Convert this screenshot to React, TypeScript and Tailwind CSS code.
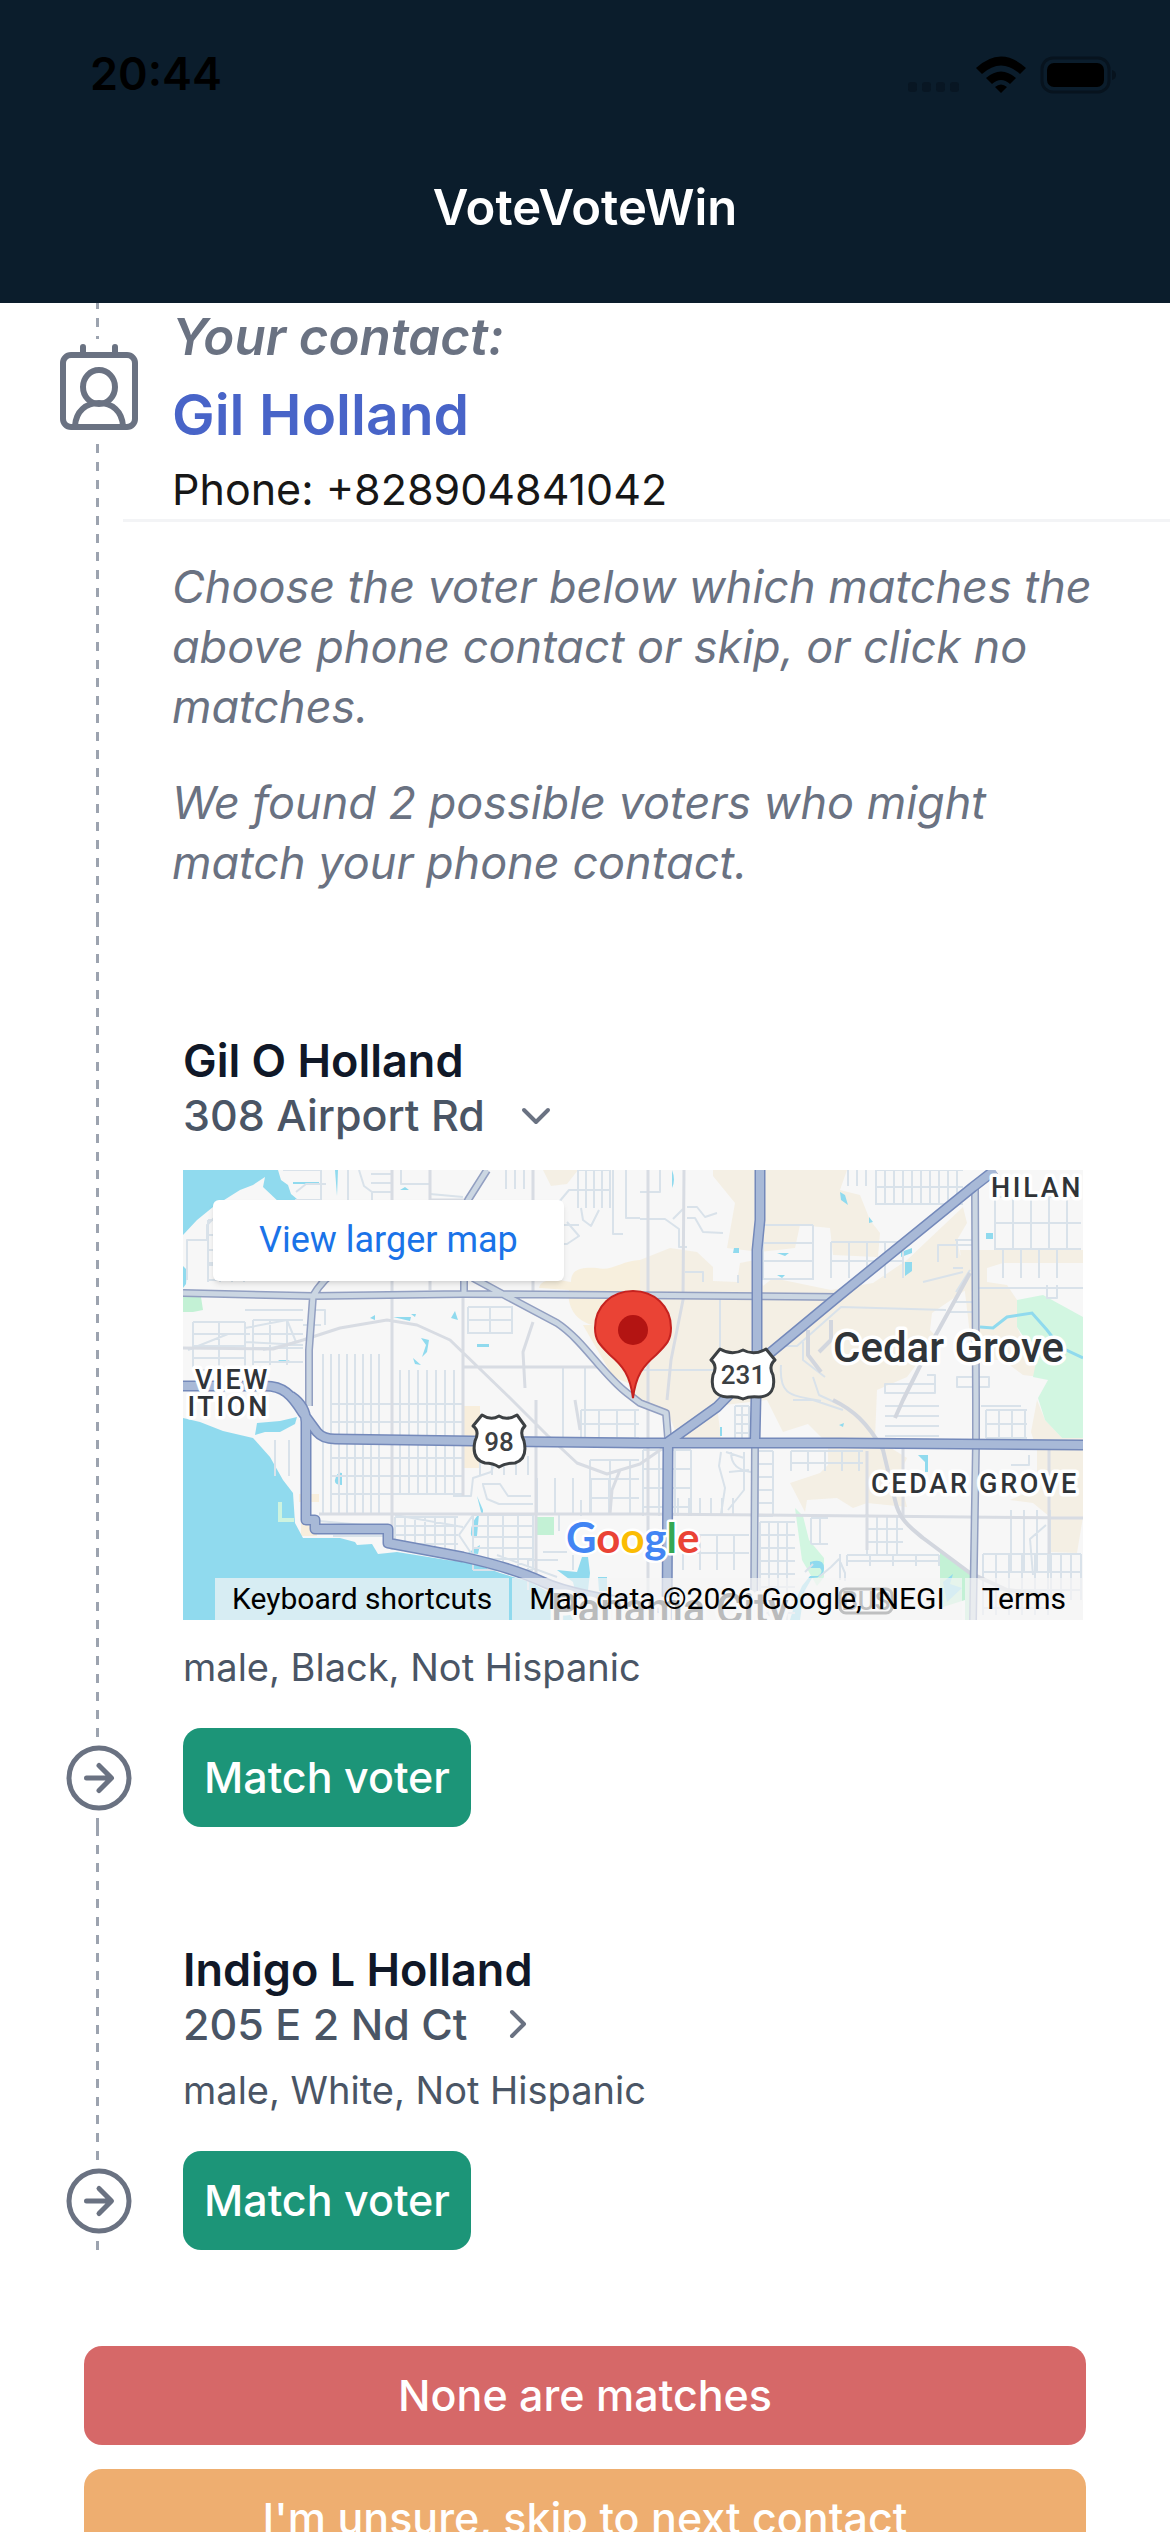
import type { ReactNode } from "react";

interface Voter {
  name: string;
  address: string;
  details: string;
  expanded: boolean;
}

const voters: Voter[] = [
  {
    name: "Gil O Holland",
    address: "308 Airport Rd",
    details: "male, Black, Not Hispanic",
    expanded: true,
  },
  {
    name: "Indigo L Holland",
    address: "205 E 2 Nd Ct",
    details: "male, White, Not Hispanic",
    expanded: false,
  },
];

// Path data for a block of evenly spaced streets
const block = (x1: number, y1: number, x2: number, y2: number, dx: number, dy: number) => {
  let d = "";
  for (let x = x1; dx > 0 && x <= x2; x += dx) d += `M${x} ${y1}V${y2}`;
  for (let y = y1; dy > 0 && y <= y2; y += dy) d += `M${x1} ${y}H${x2}`;
  return d;
};

const streets = [
  block(140, 184, 200, 345, 8, 0),
  block(217, 200, 279, 325, 9, 0),
  block(148, 234, 279, 326, 0, 18),
  block(92, 270, 120, 306, 14, 0),
  block(297, 286, 348, 305, 12, 0),
  block(290, 345, 350, 400, 15, 11),
  block(212, 347, 275, 380, 10, 9),
  block(10, 152, 62, 200, 26, 12),
  block(70, 150, 120, 195, 17, 14),
  block(25, 50, 62, 112, 12, 15),
  block(188, 4, 208, 24, 0, 9),
  block(323, 0, 350, 19, 9, 0),
  block(395, 0, 428, 38, 8, 20),
  block(665, 0, 690, 16, 9, 0),
  block(693, 0, 780, 35, 9, 17),
  block(812, 27, 898, 80, 18, 26),
  block(820, 80, 880, 108, 18, 0),
  block(580, 55, 630, 110, 50, 18),
  block(648, 72, 720, 108, 18, 19),
  block(552, 236, 566, 268, 7, 9),
  block(575, 281, 590, 346, 15, 13),
  block(608, 281, 680, 301, 17, 12),
  block(702, 236, 756, 266, 0, 10),
  block(803, 240, 844, 268, 13, 14),
  block(460, 280, 508, 346, 16, 19),
  block(495, 328, 560, 346, 11, 0),
  block(500, 365, 566, 400, 17, 18),
  block(577, 352, 612, 450, 9, 13),
  block(628, 348, 645, 374, 9, 26),
  block(684, 346, 720, 384, 10, 13),
  block(664, 385, 756, 396, 23, 6),
  block(800, 384, 868, 445, 13, 18),
  block(828, 340, 867, 402, 13, 0),
  block(868, 384, 898, 430, 10, 18),
  block(398, 240, 456, 270, 18, 14),
  block(407, 290, 456, 345, 20, 19),
  block(354, 308, 426, 345, 18, 0),
  block(380, 197, 402, 270, 22, 0),
  block(285, 137, 330, 164, 22, 13),
  "M4 110V70H24V55l22-22H84l4 10M24 93H95M62 140H120M62 172L120 175M62 158L104 150l9 22L80 180",
  "M5 180L45 164h22M120 155L138 155M132 140h10v15M100 0h38V30H112M113 22l10-8h20M176 0l5 16 8 6v14M218 0v14h28M247 24l33 3M165 0V30",
  "M352 32h24l10-12h42M398 38l2 12 8 6 8-16M350 55h46M384 52l12 14-12 8h-22M430 0V64h10M443 0v48h14",
  "M457 22h20V0M457 49h25l14 10v18h8M504 37h10l8 10 12-4M504 48h8l8 14 20 1M490 49l10-10",
  "M502 102h18v10M555 105v8M537 129v50M457 200h76M598 195c-2 30 8 30 40 36M590 176h24l44-39 105 3M620 170v20l22 17M630 207l6 18 26 12M610 230l20 0 30 10",
  "M740 112l40-10M772 70h20M774 70V88M772 132h18M766 142h24M773 122l14-22M774 207h32v10h-32zM744 205h8v18h-50v-9h50M864 115v13h10v-13",
  "M770 98H780M790 118h110M755 92V75h40M798 236h40M846 285v10h-18M720 290v60",
  "M270 326h18l2-18 18-6 6-15M299 314h18l8 12h23M300 315l4 14 12 5h34M290 345l-14 20 16 24M314 385l60 22",
  "M345 420v-30h30M376 345v16M390 385v15M398 330v16M360 382h24M383 344h74M212 345l68 12M136 351l66 6M150 366h55",
  "M538 282l-2 14 6 22-4 26M548 282c0 14 8 18 20 20M543 282l18 6M545 340l16-20V282M566 300l-20 2",
  "M636 407l12-10 8-8 6 14 0 8M622 402l8-8M657 384v26M850 405l-3-36 16-14",
].join("");

const arterials =
  "M209 0V380M280 124V326M350 0V125M353 230V410M136 344H457L900 348M280 197H415M465 0V450M501 0L500 130 488 190 484 230M247 0V120M684 281V380M720 270V346M866 280V384M248 30H281M0 178L90 179 120 170 157 158 204 150 234 155 267 170 327 228 364 265 394 293 424 304 457 294 480 278M392 230l5 30M350 152l-10 30 2 36M437 300l-8 20-2 24";

const rails =
  "M787 103L750 170 720 230 712 248M650 230C670 240 684 252 700 280L712 330C716 350 728 358 740 368L787 403 824 420 860 424M625 160V185L638 202M648 150V170L636 182";

const motorways = [
  "M0 216H82C100 216 108 224 120 243L134 262Q140 269 152 269L290 271 457 273 657 273 900 275",
  "M108 226Q123 236 123 252V350H132V359H205V373L280 387Q330 398 360 412T480 438",
  "M485 272L534 237 587 183 657 125 790 17 812 0",
  "M577 0V50L574 80V180L572 272",
  "M485 272L484 450",
].join("");

const highways = [
  "M0 123L130 126 280 124 427 125 657 127",
  "M304 0L285 30Q281 38 281 50V124",
  "M126 236V180L130 126Q140 108 160 96",
  "M290 108L325 127 374 153C400 170 420 205 444 223L457 233 483 243 485 268",
  "M792 17L793 230V273L790 450",
  "M572 273L571 450",
].join("");

const ArrowCircle = () => (
  <svg viewBox="0 0 512 512" className="size-20" fill="none" stroke="currentColor" strokeWidth="32" aria-hidden="true">
    <circle cx="256" cy="256" r="192" strokeMiterlimit="10" />
    <path d="M256 176l80 80-80 80M328 256H176" strokeLinecap="round" strokeLinejoin="round" />
  </svg>
);

const ContactIcon = () => (
  <svg viewBox="0 -2 80 93" className="h-[93px] w-20" fill="none" stroke="currentColor" strokeWidth="6" aria-hidden="true">
    <rect x="4" y="14" width="72" height="72" rx="8" />
    <path d="M24 13V6M56 13V6" strokeLinecap="round" />
    <ellipse cx="40" cy="46" rx="16" ry="17" />
    <path d="M16 85C17 70 27 62 40 62s23 8 24 23" />
  </svg>
);

const Chevron = ({ open }: { open: boolean }) => (
  <svg
    viewBox="0 0 54 54"
    className="size-[54px] text-gray-500"
    fill="none"
    stroke="currentColor"
    strokeWidth="4"
    strokeLinecap="round"
    strokeLinejoin="round"
    aria-hidden="true"
  >
    <path d={open ? "M15 22l12 12 12-12" : "M21 15l12 12-12 12"} />
  </svg>
);

const StatusBar = () => (
  <div className="flex items-center justify-between pt-[44px] pr-[53px] pl-[90px]">
    <span className="text-[45px] leading-[60px] font-semibold text-black">20:44</span>
    <svg viewBox="0 0 210 40" className="h-10 w-[210px]" aria-hidden="true">
      <g fill="#081623">
        <rect x="1" y="28" width="9" height="10" rx="3" />
        <rect x="15" y="28" width="9" height="10" rx="3" />
        <rect x="29" y="28" width="9" height="10" rx="3" />
        <rect x="43" y="28" width="9" height="10" rx="3" />
      </g>
      <path d="M69 14Q94 -9 119 14L113 20Q94 3 75 20ZM79 24Q94 11 109 24L103 30Q94 22 85 30ZM88 33Q94 28 100 33L94 39Z" fill="#000" />
      <rect x="135" y="4" width="67" height="34" rx="11" fill="none" stroke="#07131e" strokeWidth="3" />
      <rect x="140" y="9" width="57" height="24" rx="7" fill="#000" />
      <path d="M205 16q4 1 4 5t-4 5z" fill="#07131e" />
    </svg>
  </div>
);

const VoterMap = () => (
  <div className="relative mt-7 mb-5 aspect-[2/1] overflow-hidden font-['Roboto',sans-serif]">
    <svg viewBox="0 0 900 450" className="size-full" aria-label="Map of the voter's address">
      <rect width="900" height="450" fill="#f7f7f7" />
      <g fill="#f4efe4">
        <path d="M530 0H664L657 20 677 25 687 50 697 63 695 87 650 85 647 58 617 55 612 78 577 82 544 78 552 33 530 6Z" />
        <path d="M457 90L487 78 514 82 530 97V111L554 112 557 93 572 90 580 116 590 108 648 120 690 113 724 90 780 37 784 53 774 70 777 85 790 93 787 117 749 143 747 160 754 167 724 207 694 220 692 268 724 288 716 305 724 337 684 333 670 338 654 328 624 330 622 342 607 313 637 303 645 295V274L625 254 600 262 584 230 534 236 538 268 495 268 484 240 457 236 440 200Z" />
        <path d="M777 80H900V93L820 93 804 98 804 112 824 115 834 130V157L857 207 840 205 820 190 790 190Z" />
        <path d="M854 230L862 250 879 268H900V347L894 383 867 382V347L850 333 827 330 854 318V280L848 262Z" />
        <path d="M360 0H395L384 14 368 16Z" />
        <path d="M388 112C388 98 400 97 414 98 428 102 440 90 457 90V150L410 155C388 150 384 130 386 120L356 118Q358 106 388 112ZM400 155h20l30 60-20-8Z" fill="#f7efdd" />
        <path d="M280 236h17v62h-17zM116 324h20v8h-20zM118 352h16v14h-16z" fill="#f8eedc" />
      </g>
      <g fill="#d2f6e1">
        <path d="M834 130L860 125 900 147V268H879L862 250 855 228 865 210 850 207 854 187 834 157Z" />
        <path d="M612 338L620 346 626 370 641 388V407L634 416 619 390Z" />
        <path d="M0 127H18L20 140 10 142H0ZM354 347h17v18h-17zM757 382L789 403V450H782V430L757 438Z" fill="#c3f1d5" />
      </g>
      <g fill="#90daee">
        <path d="M0 0H95L98 10 105 15 108 24 120 34H98L80 17 82 7 70 15 57 20 30 37 14 50 0 65Z" />
        <path d="M0 248L17 252 40 261 70 268 87 287 100 310 110 323 112 353 120 368H157L172 372 174 375 189 374 195 384 214 382 264 390 290 393 317 403 347 412 380 430 390 450H0Z" />
        <path d="M72 265L74 253 97 251 114 247 112 254 97 262 82 262ZM0 96L4 100 3 114 0 118ZM152 310q2-9 7-7v12q-8 0-7-5Z" />
        <path d="M374 400L394 402 399 387H405L407 403 405 420H392L390 412ZM415 407h9v14h-8ZM187 148l5-3v5zM210 147h18l-1 4zM228 144h5l-1 3zM268 148l4-7 3 9zM294 174h12v3h-12zM238 168l8 2-2 12-5 5 4-12zM230 188l8 7-6-1zM95 190h12l-8 3zM217 20l5-3 4 3zM152 0h3l-1 26zM110 12h26v2h-26z" />
        <path d="M294 326l6 14v6l-2-4zM288 362q0-10 8-18l-2 22q-7 3-6-4ZM285 383l12-8-2 9zM657 22l5 3 3 10-7-5zM686 47l4 5-4 1zM551 78h5v5h-6zM594 83h12l-4 3zM594 105h8l-3 3zM718 82l11-4v5l-11 4zM722 92h7v9l-7 5zM803 63h7v6h-7zM656 255l5-2-1 4z" />
        <path d="M735 285h10v17h-3v-10zM537 257h2v9h-2zM489 0q4 10 0 18z" />
        <path d="M627 392q14-4 14 6t-12 10l-8 14-4 28h-10l6-20 6-14 8-10h8q6-4 2-8h-10zM760 412l10-8-3 10 12 4-15 14z" />
      </g>
      <path d="M797 157L810 158 824 147 849 143 864 160 877 177 900 188" fill="none" stroke="#90daee" strokeWidth="3" />
      <path d="M97 332V350H111" fill="none" stroke="#cdf3df" strokeWidth="4" />
      <g fill="none" strokeLinejoin="round">
        <path d={streets} stroke="#d9e2ea" strokeWidth="2" />
        <path d={arterials} stroke="#d8dce3" strokeWidth="3" />
        <path d={rails} stroke="#d2d6de" strokeWidth="4" />
        <path d={highways} stroke="#929fc1" strokeWidth="8" />
        <path d={highways} stroke="#cbd6e2" strokeWidth="5" />
        <path d={motorways} stroke="#7489ba" strokeWidth="11" />
        <path d={motorways} stroke="#a8b9d7" strokeWidth="8" />
      </g>

      {/* Route shields */}
      <g fill="#fff" stroke="#3c4043" strokeWidth="3" strokeLinejoin="round">
        <path d="M537 179Q549 186 560 180 571 186 583 179L592 190Q585 196 590 205 594 226 576 227 566 226 560 229 554 226 544 227 526 226 530 205 535 196 528 190Z" />
        <path d="M299 245Q308 251 316 246 324 251 334 245L342 256Q336 261 341 271 345 289 332 293 322 293 316 297 310 293 302 293 288 289 292 271 297 261 290 256Z" />
        <rect x="657" y="419" width="52" height="24" rx="6" />
      </g>
      <g fill="#3c4043" textAnchor="middle" className="text-[26px] font-medium">
        <text x="560" y="214">231</text>
        <text x="316" y="281">98</text>
        <text x="683" y="440">BUS</text>
      </g>

      <g fill="#303438" stroke="#fff" strokeWidth="7" strokeLinejoin="round" paintOrder="stroke">
        <g className="text-[27px] font-medium tracking-widest">
          <text x="808" y="27">HILAN</text>
          <text x="87" y="219" textAnchor="end">VIEW</text>
          <text x="87" y="246" textAnchor="end">ITION</text>
          <text x="688" y="323">CEDAR GROVE</text>
        </g>
        <g className="text-[42px] font-medium">
          <text x="650" y="192">Cedar Grove</text>
          <text x="368" y="453">Panama City</text>
        </g>
      </g>

      {/* Location pin */}
      <path d="M450 228C447 205 440 196 427 185 416 174 412 170 412 158 412 136 429 121 450 121S488 136 488 158C488 170 484 174 473 185 460 196 453 205 450 228Z" fill="#ea4335" stroke="#c5221f" strokeWidth="2" />
      <circle cx="450" cy="160" r="15" fill="#b31412" />

      <text x="383" y="383" stroke="#fff" strokeWidth="5" strokeLinejoin="round" paintOrder="stroke" className="font-['Lato',sans-serif] text-[42px] font-bold">
        <tspan fill="#4285f4">G</tspan>
        <tspan fill="#ea4335">o</tspan>
        <tspan fill="#fbbc04">o</tspan>
        <tspan fill="#4285f4">g</tspan>
        <tspan fill="#34a853">l</tspan>
        <tspan fill="#ea4335">e</tspan>
      </text>
    </svg>

    <a href="#map" className="absolute top-[30px] left-[30px] rounded-md bg-white px-[46px] text-[36px] leading-[81px] text-[#1a73e8] shadow-md">
      View larger map
    </a>
    <div className="absolute right-0 bottom-0 flex gap-[3px] text-[30px] leading-[42px] text-black">
      <button type="button" className="bg-[#f5f5f5]/70 px-[17px]">Keyboard shortcuts</button>
      <span className="bg-[#f5f5f5]/70 px-[17px]">Map data ©2026 Google, INEGI</span>
      <a href="#terms" className="bg-[#f5f5f5]/70 px-[17px]">Terms</a>
    </div>
  </div>
);

interface TimelineItemProps {
  marker: ReactNode;
  dash?: string;
  children: ReactNode;
}

const TimelineItem = ({ marker, dash = "bg-[position:0_0]", children }: TimelineItemProps) => (
  <li className="flex">
    <div className="relative w-[123px] shrink-0 text-gray-500">
      <div
        className={`absolute inset-y-0 left-24 w-[3px] bg-[linear-gradient(#9ca3af_50%,transparent_50%)] bg-[length:3px_18px] bg-repeat-y ${dash}`}
      />
      {marker}
    </div>
    <div className="min-w-0 flex-1">{children}</div>
  </li>
);

const VoterItem = ({ voter }: { voter: Voter }) => (
  <TimelineItem
    marker={
      <div className="absolute bottom-[9px] left-[59px] flex h-[81px] items-end bg-white">
        <ArrowCircle />
      </div>
    }
  >
    <div className="pt-[116px] pr-[87px] pl-[60px]">
      <h2 className="text-[45px] leading-[54px] font-semibold text-gray-900">{voter.name}</h2>
      <button
        type="button"
        aria-expanded={voter.expanded}
        className="flex items-center gap-6 text-[43px] leading-[54px] font-medium text-gray-600"
      >
        {voter.address}
        <Chevron open={voter.expanded} />
      </button>
      {voter.expanded && <VoterMap />}
      <p className="mt-3 text-[38px] leading-[54px] text-gray-600">{voter.details}</p>
      <button
        type="button"
        className="mt-[34px] rounded-[18px] bg-[#1c9578] px-[21px] text-[43px] leading-[99px] font-medium text-white"
      >
        Match voter
      </button>
    </div>
  </TimelineItem>
);

export default function App() {
  return (
    <div className="flex h-screen flex-col overflow-hidden bg-white font-['Inter',sans-serif]">
      <header className="h-[303px] shrink-0 bg-[#0b1d2c]">
        <StatusBar />
        <h1 className="mt-[72px] text-center text-[49px] leading-[63px] font-semibold text-white">VoteVoteWin</h1>
      </header>

      <main className="min-h-0 flex-1 overflow-hidden">
        <ol>
          <TimelineItem
            dash="bg-[position:0_-3px]"
            marker={
              <div className="absolute top-9 left-[59px] flex h-[105px] bg-white">
                <ContactIcon />
              </div>
            }
          >
            <div className="border-b-[3px] border-gray-100 pt-1 pl-[49px]">
              <p className="text-[51px] leading-[60px] font-semibold text-gray-500 italic">Your contact:</p>
              <p className="mt-1 text-[57px] leading-[88px] font-semibold text-[#4864c8]">Gil Holland</p>
              <p className="text-[43px] leading-[60px] text-neutral-900">Phone: +828904841042</p>
            </div>
            <div className="space-y-9 pt-[35px] pr-[72px] pb-[25px] pl-[49px] text-[45px] leading-[60px] text-gray-500 italic">
              <p>Choose the voter below which matches the above phone contact or skip, or click no matches.</p>
              <p>We found 2 possible voters who might match your phone contact.</p>
            </div>
          </TimelineItem>
          {voters.map((voter) => (
            <VoterItem key={voter.name} voter={voter} />
          ))}
        </ol>

        <div className="flex flex-col gap-6 px-[84px] pt-24 text-[43px] leading-[99px] font-medium text-white">
          <button type="button" className="rounded-[18px] bg-[#d66868]">None are matches</button>
          <button type="button" className="rounded-[18px] bg-[#eeae70]">I'm unsure, skip to next contact</button>
        </div>
      </main>
    </div>
  );
}
